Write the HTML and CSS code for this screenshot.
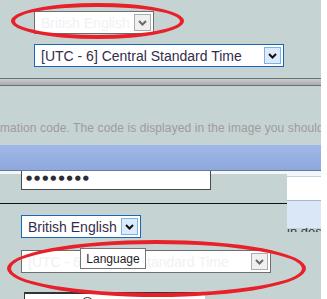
FILE: index.html
```html
<!DOCTYPE html>
<html lang="en">
<head>
  <meta charset="UTF-8" />
  <title>Language settings</title>
  <link rel="stylesheet" href="styles.css">
</head>
<body>
  <div class="page">
    <div class="top-pane">
      <div class="select select-disabled select-lang">
        <span class="select-text">British English</span>
        <span class="select-arrow">
          <svg width="9" height="6" viewBox="0 0 9 6"><path d="M1 1 L4.5 4.5 L8 1" fill="none" stroke="currentColor" stroke-width="2"/></svg>
        </span>
      </div>
      <div class="select select-tz">
        <span class="select-text">[UTC - 6] Central Standard Time</span>
        <span class="select-arrow">
          <svg width="9" height="6" viewBox="0 0 9 6"><path d="M1 1 L4.5 4.5 L8 1" fill="none" stroke="currentColor" stroke-width="2"/></svg>
        </span>
      </div>
    </div>

    <div class="divider"></div>

    <div class="notice">mation code. The code is displayed in the image you should</div>

    <div class="blue-bar"></div>

    <div class="form-pane">
      <div class="form-main">
        <div class="pw-field"><span class="pw-dots">●●●●●●●●</span></div>
        <div class="rule"></div>
        <div class="select select-lang">
          <span class="select-text">British English</span>
          <span class="select-arrow">
            <svg width="9" height="6" viewBox="0 0 9 6"><path d="M1 1 L4.5 4.5 L8 1" fill="none" stroke="currentColor" stroke-width="2"/></svg>
          </span>
        </div>
        <div class="select select-disabled select-tz">
          <span class="select-text">[UTC - 6] Central Standard Time</span>
          <span class="select-arrow">
            <svg width="9" height="6" viewBox="0 0 9 6"><path d="M1 1 L4.5 4.5 L8 1" fill="none" stroke="currentColor" stroke-width="2"/></svg>
          </span>
        </div>
        <div class="radio-box">
          <span class="radio-label">Label</span>
          <span class="radio-dot"></span>
          <span class="radio-label">lit</span>
        </div>
      </div>
      <div class="form-side">
        <div class="side-white"></div>
        <div class="side-blue"></div>
        <div class="side-text">in desc</div>
      </div>
    </div>

    <div class="tooltip">Language</div>
    <div class="mark mark-top"></div>
    <div class="mark mark-bottom"></div>
  </div>
</body>
</html>
```

FILE: styles.css
```css
* {
  box-sizing: border-box;
  margin: 0;
  padding: 0;
}

html, body {
  background: #ffffff;
  overflow: hidden;
}

.page {
  position: relative;
  width: 321px;
  height: 299px;
  background-color: #c5d3d3;
  font-family: "Liberation Sans", Arial, sans-serif;
  overflow: hidden;
}

/* fake select boxes */
.select {
  display: flex;
  align-items: center;
  justify-content: space-between;
  height: 23px;
  padding: 0 2px 0 6px;
  background: #ffffff;
  border: 1px solid #1c66b8;
  color: #342c4c;
  font-size: 14px;
  white-space: nowrap;
}
.select-arrow {
  display: flex;
  align-items: center;
  justify-content: center;
  width: 17px;
  height: 17px;
  background: #dcebfb;
  border: 1px solid #7eb0e8;
  color: #111111;
}
.select-disabled {
  border-color: #6e6e6e;
  color: #f1f1f5;
}
.select-disabled .select-arrow {
  background: #f0f0f0;
  border-color: #acacac;
  color: #6a6a6a;
}

.top-pane {
  height: 78px;
  padding-top: 11px;
}
.top-pane .select-lang {
  width: 120px;
  margin-left: 34px;
}
.top-pane .select-tz {
  width: 250px;
  margin-left: 34px;
  margin-top: 10px;
}

.divider {
  height: 8px;
  border-top: 1px solid #5e7878;
  border-bottom: 1px solid #5e7878;
  background: linear-gradient(#cfcbd3, #bdb9c1 50%, #aeaab2);
}

.notice {
  height: 59px;
  padding-top: 35px;
  font-size: 12px;
  letter-spacing: 0.1px;
  color: #a09b9b;
  white-space: nowrap;
  overflow: hidden;
}

.blue-bar {
  height: 26px;
  background: linear-gradient(#a0b8e9, #8fa8dc);
  border-bottom: 1px solid #687a98;
}

.form-pane {
  display: grid;
  grid-template-columns: 287px 34px;
  height: 129px;
}

.form-main {
  border-top: 3px solid #f2f6fa;
}
.pw-field {
  width: 190px;
  height: 19px;
  margin-left: 21px;
  margin-top: -3px;
  padding: 3px 0 0 4px;
  background: #ffffff;
  border: 1px solid #4a4a4a;
  border-top: none;
}
.pw-dots {
  display: block;
  font-family: "DejaVu Sans", sans-serif;
  font-size: 7px;
  letter-spacing: 2px;
  line-height: 8px;
  color: #2c2c34;
}
.rule {
  height: 1px;
  margin-top: 13px;
  background: #111111;
}
.form-main .select-lang {
  width: 120px;
  margin-left: 21px;
  margin-top: 11px;
}
.form-main .select-tz {
  width: 250px;
  margin-left: 21px;
  margin-top: 12px;
}

.radio-box {
  display: flex;
  align-items: flex-start;
  gap: 6px;
  width: 181px;
  height: 14px;
  margin-left: 24px;
  margin-top: 19px;
  padding: 3px 0 0 18px;
  background: #ffffff;
  border-top: 2px solid #333333;
  border-left: 1px solid #333333;
  font-size: 13px;
  line-height: 14px;
  color: #222222;
  overflow: hidden;
}
.radio-dot {
  width: 13px;
  height: 13px;
  border: 1px solid #333333;
  border-radius: 50%;
}

.form-side {
  display: flex;
  flex-direction: column;
}
.side-white {
  height: 30px;
  background: #ffffff;
  border-bottom: 1px solid #a7b7c8;
  box-shadow: inset 0 5px 0 #f3f7fb, inset 0 6px 0 #c4d0dc;
}
.side-blue {
  height: 27px;
  background: #d9e7f7;
}
.side-text {
  height: 4px;
  overflow: hidden;
  font-size: 13px;
  line-height: 8px;
  color: #333a44;
  white-space: nowrap;
}

/* overlays */
.tooltip {
  position: absolute;
  left: 80px;
  top: 248px;
  width: 66px;
  height: 21px;
  padding-top: 3px;
  background: #ffffff;
  border: 1px solid #767676;
  font-size: 12px;
  color: #1e1e1e;
  text-align: center;
}
.mark {
  position: absolute;
  border: 4px solid #e8202a;
  border-radius: 50%;
}
.mark-top {
  left: 11px;
  top: 3px;
  width: 173px;
  height: 36px;
}
.mark-bottom {
  left: 7px;
  top: 240px;
  width: 299px;
  height: 57px;
}
```
